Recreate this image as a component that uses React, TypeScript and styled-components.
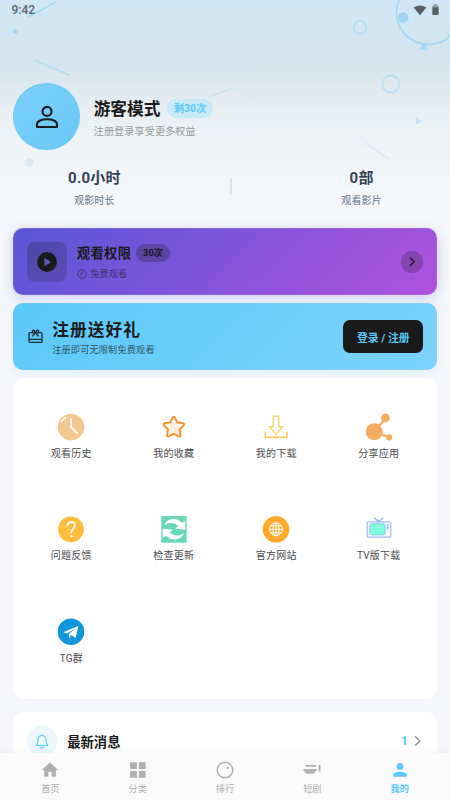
import React from 'react';
import styled, { createGlobalStyle, css } from 'styled-components';

const Global = createGlobalStyle`
  * { box-sizing: border-box; }
  html, body { margin: 0; padding: 0; }
  body {
    font-family: Roboto, 'Noto Sans CJK SC', sans-serif;
    background: #f5f7fb;
    overflow: hidden;
  }
  svg { display: block; flex: none; }
`;

const Screen = styled.div`
  position: relative;
  display: flex;
  flex-direction: column;
  width: 450px;
  height: 800px;
  overflow: hidden;
  background: linear-gradient(180deg, #cfe7f6 0, #d0e5f1 35px, #d2e4ed 60px, #dae7ee 78px, #e2eaf1 94px, #e7eff3 112px, #edf2f6 132px, #f1f5f8 165px, #f5f7fb 200px, #f5f6fb 100%);
`;

const Decor = styled.svg`
  position: absolute;
  left: 0;
  top: 0;
`;

const StatusBar = styled.div`
  position: relative;
  display: flex;
  justify-content: space-between;
  align-items: center;
  height: 20px;
  padding: 0 11.5px;
  color: #5b666d;
  font-size: 12px;
  font-weight: 500;
`;

const StatusIcons = styled.div`
  display: flex;
  gap: 5px;
  margin-top: -1px;
`;

const Content = styled.main`
  position: relative;
  flex: 1;
  min-height: 0;
  padding: 63px 13.33px 0;
`;

const Profile = styled.section`
  display: flex;
  align-items: center;
  height: 67px;
`;

const ProfileText = styled.div`
  padding-top: 2px;
`;

const Avatar = styled.div`
  display: flex;
  align-items: center;
  justify-content: center;
  width: 67px;
  height: 67px;
  margin-right: 13.4px;
  border-radius: 50%;
  border: 1px solid rgba(90, 195, 245, 0.5);
  background: linear-gradient(135deg, #7dcff9, #68c9f9);
`;

const TitleRow = styled.div`
  display: flex;
  align-items: center;
`;

const UserName = styled.h1`
  margin: 0;
  padding-top: 2px;
  color: #1a1a1a;
  font-size: 16.67px;
  line-height: 24px;
  font-weight: 700;
`;

const QuotaBadge = styled.span`
  margin-left: 7px;
  padding: 0.5px 6.7px 0;
  border-radius: 9px;
  background: #c8e9f8;
  color: #5ac8fa;
  font-size: 10px;
  line-height: 18px;
  font-weight: 700;
  letter-spacing: 0.25px;
`;

const UserHint = styled.p`
  margin: 2px 0 0;
  color: #999;
  font-size: 10px;
  line-height: 16px;
  letter-spacing: 0.2px;
`;

const Stats = styled.section`
  display: flex;
  align-items: center;
  justify-content: space-around;
  height: 78.3px;
  padding-bottom: 4px;
`;

const Stat = styled.div`
  text-align: center;
`;

const StatValue = styled.div`
  color: #334155;
  font-size: 15px;
  line-height: 22px;
  font-weight: 700;
  letter-spacing: 0.2px;
`;

const StatLabel = styled.div`
  margin-top: 4px;
  color: #64748b;
  font-size: 10px;
  line-height: 15px;
  letter-spacing: 0.15px;
`;

const StatDivider = styled.div`
  width: 1.6px;
  height: 17px;
  margin-bottom: 1px;
  background: #dfe3e8;
`;

const Banner = styled.section<{ $kind: 'rights' | 'gift' }>`
  display: flex;
  align-items: center;
  height: 66.7px;
  padding: 0 13.33px;
  border-radius: 10px;
  color: #1a1a1a;
  ${(p) =>
    p.$kind === 'rights'
      ? css`
          background: linear-gradient(135deg, #5856d6, #af52de);
          box-shadow: inset 0 0 0 0.8px rgba(255, 255, 255, 0.1), 0 3px 12px rgba(88, 86, 214, 0.26);
        `
      : css`
          margin-top: 8.3px;
          background: linear-gradient(135deg, #5ac8fa, #7dd3fc);
          box-shadow: inset 0 0 0 0.8px rgba(150, 200, 235, 0.25), 0 3px 10px rgba(90, 200, 250, 0.14);
        `}
`;

const PlayTile = styled.div`
  display: flex;
  align-items: center;
  justify-content: center;
  width: 40px;
  height: 40px;
  margin-right: 10.2px;
  border-radius: 8px;
  background: linear-gradient(135deg, rgba(26, 26, 26, 0.25), rgba(26, 26, 26, 0.15));
`;

const BannerText = styled.div<{ $gap?: number }>`
  flex: 1;
  margin-left: ${(p) => p.$gap ?? 0}px;
`;

const RightsTitle = styled.h2`
  margin: 0;
  padding-top: 2px;
  font-size: 13.33px;
  line-height: 20px;
  font-weight: 700;
  letter-spacing: 0.3px;
`;

const RightsBadge = styled.span`
  margin-left: 5px;
  padding: 0 6.7px;
  border-radius: 9px;
  background: rgba(26, 26, 26, 0.27);
  font-size: 9.17px;
  line-height: 17.5px;
  font-weight: 700;
  letter-spacing: 0.1px;
`;

const RightsHint = styled.div`
  display: flex;
  align-items: center;
  gap: 3.6px;
  margin-top: 2px;
  color: rgba(26, 26, 26, 0.62);
  font-size: 9.17px;
  line-height: 15px;
`;

const RoundArrow = styled.div`
  display: flex;
  align-items: center;
  justify-content: center;
  width: 22px;
  height: 22px;
  border-radius: 50%;
  background: rgba(26, 26, 26, 0.24);
`;

const GiftTitle = styled.h2`
  margin: 4px 0 0;
  font-size: 16.67px;
  line-height: 22px;
  font-weight: 700;
  letter-spacing: 1.1px;
`;

const GiftHint = styled.p`
  margin: 0;
  color: rgba(26, 26, 26, 0.72);
  font-size: 9.17px;
  line-height: 15px;
  letter-spacing: 0.17px;
`;

const LoginButton = styled.button`
  width: 80px;
  height: 33.4px;
  padding: 0;
  border: 0;
  border-radius: 7px;
  background: #1a1a1a;
  color: #5ac8fa;
  font: inherit;
  font-size: 10.83px;
  font-weight: 700;
`;

const Menu = styled.section`
  display: grid;
  grid-template-columns: repeat(4, 102.5px);
  grid-auto-rows: 102.5px;
  justify-content: center;
  height: 320.8px;
  margin-top: 8px;
  padding-top: 7px;
  border-radius: 11px;
  background: #fff;
`;

const MenuItem = styled.div`
  display: flex;
  flex-direction: column;
  align-items: center;
  padding-top: 27.6px;
  color: #4b4b4b;
  font-size: 10px;
  line-height: 15px;
  letter-spacing: 0.2px;
`;

const MenuIcon = styled.svg.attrs({ viewBox: '0 0 28 28', width: 28, height: 28, fill: 'none' })`
  margin-bottom: 5.4px;
`;

const News = styled.section`
  display: flex;
  align-items: center;
  height: 90px;
  margin-top: 13.2px;
  padding: 0 13.33px 31px;
  border-radius: 11px;
  background: #fff;
`;

const BellCircle = styled.div`
  display: flex;
  align-items: center;
  justify-content: center;
  width: 30px;
  height: 30px;
  margin-right: 10.5px;
  border-radius: 50%;
  background: #ebf8fe;
`;

const NewsTitle = styled.h2`
  flex: 1;
  margin: 0;
  padding-top: 3px;
  color: #1a1a1a;
  font-size: 13.33px;
  line-height: 20px;
  font-weight: 700;
`;

const NewsCount = styled.span`
  margin-right: 5.5px;
  color: #5ac8fa;
  font-size: 12px;
  font-weight: 700;
`;

const NavBar = styled.nav`
  position: relative;
  display: flex;
  height: 47px;
  padding: 0 6.67px;
  background: #fafafa;
  box-shadow: 0 -1px 7px rgba(0, 0, 0, 0.05);
`;

const NavItem = styled.div<{ $active?: boolean }>`
  display: flex;
  flex: 1;
  flex-direction: column;
  align-items: center;
  gap: 1.8px;
  padding-top: 7px;
  color: ${(p) => (p.$active ? '#5ac8fa' : '#b0b0b0')};
  font-size: 9.17px;
  line-height: 14px;
  font-weight: ${(p) => (p.$active ? 700 : 400)};
`;

const menu: { label: string; icon: React.ReactNode }[] = [
  {
    label: '观看历史',
    icon: (
      <>
        <circle cx="14" cy="14" r="13.3" fill="#f3c891" />
        <path d="M14 5.9v8.3l6.2 6.2" stroke="#fff" strokeWidth="1.7" strokeLinecap="round" strokeLinejoin="round" />
        <path d="M4.4 8.6C5.6 6.5 7 5.4 9.1 4.4" stroke="#fff" strokeWidth="1.4" strokeLinecap="round" />
      </>
    ),
  },
  {
    label: '我的收藏',
    icon: (
      <>
        <circle cx="14.6" cy="16" r="7.6" fill="#fff1e2" />
        <path
          d="M12.6 4.8q1.2-2.4 2.4 0l2.2 4.5 5.4.8q2.7.5.8 2.5l-3.8 3.8.9 5.4q.3 2.6-2.1 1.5l-4.6-2.5-4.6 2.5q-2.4 1.1-2.1-1.5l.9-5.4-3.8-3.8q-1.9-2 .8-2.5l5.4-.8z"
          stroke="#ff8a16" strokeWidth="1.8" strokeLinejoin="round"
        />
      </>
    ),
  },
  {
    label: '我的下载',
    icon: (
      <>
        <path d="M11.2 3.2h5.6v10.6h3.8L14 21.2l-6.6-7.4h3.8z" stroke="#f8d36c" strokeWidth="1.4" />
        <path d="M3.3 18.5v5.9h21.6v-5.9" stroke="#f6ce5d" strokeWidth="1.6" />
      </>
    ),
  },
  {
    label: '分享应用',
    icon: (
      <>
        <path d="M9 18.8 20.5 5.2M9 18.8l15.2 5.4" stroke="#f3ac61" strokeWidth="2.2" />
        <circle cx="9.2" cy="18.7" r="8.5" fill="#f3ac61" />
        <circle cx="20.4" cy="5" r="4.4" fill="#f3ac61" />
        <circle cx="24.2" cy="24.3" r="3.1" fill="#f3ac61" />
      </>
    ),
  },
  {
    label: '问题反馈',
    icon: (
      <>
        <circle cx="14" cy="14.3" r="12.9" fill="#ffbc3d" />
        <path d="M10.4 10.8c.1-5 7.6-5 7.6-.2 0 3.1-3.8 3.4-3.8 7.1" stroke="#fff" strokeWidth="1.8" strokeLinecap="round" />
        <circle cx="14.2" cy="21.3" r="1.2" fill="#fff" />
      </>
    ),
  },
  {
    label: '检查更新',
    icon: (
      <>
        <path d="M1.3 1h25.4v26.7H1.3z" fill="#6ad8b8" />
        <path
          d="M4.2 10.3C7 3 16.5 2.2 21.6 7.6l3.7-1.4v8.6L15 13.6l3.3-2.5C14.6 7.2 9 7 4.2 10.3zM24 18.2c-2.8 7.3-12.3 8.1-17.6 2.7l-3.7 1.6v-8.7l10.2.9-3.2 2.8c3.6 3.9 9.5 4 14.3.7z"
          fill="#fff"
        />
      </>
    ),
  },
  {
    label: '官方网站',
    icon: (
      <>
        <circle cx="14" cy="14.3" r="13.3" fill="#ffaa2b" />
        <g stroke="#fff" strokeWidth="1">
          <circle cx="14" cy="14.3" r="6.5" />
          <ellipse cx="14" cy="14.3" rx="3.1" ry="6.5" />
          <path d="M14 7.8v13M7.5 14.3h13M8.5 10.9h11M8.5 17.7h11" />
        </g>
      </>
    ),
  },
  {
    label: 'TV版下载',
    icon: (
      <>
        <path d="m9.2 2.9 4.6 3.8 4.4-3.8M12.6 5.7h3" stroke="#80acef" strokeWidth="1.1" />
        <rect x="2.2" y="6.8" width="23.6" height="15.4" rx="1.3" stroke="#9bb9fb" strokeWidth="1.2" />
        <rect x="4.7" y="8.7" width="15.4" height="11.2" rx="1.8" fill="#7effde" stroke="#79bce9" strokeWidth=".8" />
        <path d="M21.4 9.8h2.8M21.4 12.8h2.8M22.7 8.5v5.8" stroke="#9bb9fb" strokeWidth="1" />
      </>
    ),
  },
  {
    label: 'TG群',
    icon: (
      <>
        <circle cx="14" cy="13.7" r="13.3" fill="#1296db" />
        <path d="m6.2 14.3 15.1-6.2-2.6 12-4.3-3.2-2.3 3.5-.3-4.4 6.6-5.4-8.2 4.7z" fill="#fff" />
      </>
    ),
  },
];

const nav: { label: string; icon: React.ReactNode }[] = [
  { label: '首页', icon: <path d="M8.3 16.7v-5h3.4v5h4.1V10h2.5L10 2.4 1.7 10h2.5v6.7z" fill="currentColor" /> },
  { label: '分类', icon: <path d="M2.1 2.3H9V9H2.1zM10.8 2.3h6.8V9h-6.8zM2.1 10.9H9v6.8H2.1zM10.8 10.9h6.8v6.8h-6.8z" fill="currentColor" /> },
  {
    label: '排行',
    icon: (
      <>
        <circle cx="10" cy="10" r="7.8" stroke="currentColor" strokeWidth="1.5" />
        <circle cx="12.7" cy="7.9" r="1.2" fill="currentColor" />
      </>
    ),
  },
  { label: '短剧', icon: <path d="M3.4 5H14v1.8H3.4zM1.5 9h13.2v1.8q-.8.7-1.8.8V13q-1.3.7-1.9.7H5.2q-1.2 0-1.9-.8v-1.2q-1.4-.1-1.8-1zM16.7 5h1.8v6.7h-1.8z" fill="currentColor" /> },
  {
    label: '我的',
    icon: (
      <>
        <circle cx="10" cy="6.4" r="3.4" fill="currentColor" />
        <path d="M3.3 16.8v-2c0-4.2 13.4-4.2 13.4 0v2z" fill="currentColor" />
      </>
    ),
  },
];

export default function App() {
  return (
    <Screen>
      <Global />
      <Decor width="450" height="210" viewBox="0 0 450 210" fill="none">
        <g stroke="#8ed2f5">
          <circle cx="428.5" cy="12.5" r="32" strokeWidth="1.6" opacity=".7" />
          <circle cx="360" cy="27.5" r="6.3" strokeWidth="1.2" opacity=".5" />
          <circle cx="390.8" cy="84" r="8.5" strokeWidth="1.3" opacity=".5" />
          <circle cx="344" cy="181" r="5.5" strokeWidth=".8" opacity=".14" />
          <path d="M28 17 56 2" strokeWidth="1.8" opacity=".6" />
          <path d="m35 60.5 34 14.3" strokeWidth="1.8" opacity=".45" />
          <path d="m209 96.5 23.5-8" strokeWidth="1.5" opacity=".3" />
          <path d="m365.5 143 23.3 16" strokeWidth="1.5" opacity=".26" />
        </g>
        <g fill="#7ecaf4">
          <circle cx="403.3" cy="17.5" r="5.2" opacity=".55" />
          <circle cx="15" cy="31.5" r="2.6" opacity=".5" />
          <circle cx="29" cy="162.5" r="4.2" opacity=".22" />
          <path d="m419.5 48.5 6.5-6.5 1.8 9z" opacity=".5" />
          <path d="m415.8 117 6 4.5-5.6 2.8z" opacity=".38" />
        </g>
      </Decor>

      <StatusBar>
        <span>9:42</span>
        <StatusIcons>
          <svg width="14" height="12" viewBox="0 0 14 12"><path d="M.6 3.5Q7-.4 13.4 3.5L7 11.3z" fill="#555f65" /></svg>
          <svg width="7" height="12" viewBox="0 0 7 12"><path d="M2 0h3v1.5H2z" fill="#8a999f" /><path d="M.4 1.5h6.2V4H.4z" fill="#8a999f" /><path d="M.4 3.5h6.2V11H.4z" fill="#555f65" /></svg>
        </StatusIcons>
      </StatusBar>

      <Content>
        <Profile>
          <Avatar>
            <svg width="24" height="24" viewBox="0 0 24 24" fill="none" stroke="#1a1a1a" strokeWidth="2.1">
              <circle cx="12" cy="6.4" r="4.5" />
              <path d="M2 22v-2.9C2 12.6 22 12.6 22 19.1V22z" strokeLinejoin="round" />
            </svg>
          </Avatar>
          <ProfileText>
            <TitleRow>
              <UserName>游客模式</UserName>
              <QuotaBadge>剩30次</QuotaBadge>
            </TitleRow>
            <UserHint>注册登录享受更多权益</UserHint>
          </ProfileText>
        </Profile>

        <Stats>
          <Stat>
            <StatValue>0.0小时</StatValue>
            <StatLabel>观影时长</StatLabel>
          </Stat>
          <StatDivider />
          <Stat>
            <StatValue>0部</StatValue>
            <StatLabel>观看影片</StatLabel>
          </Stat>
        </Stats>

        <Banner $kind="rights">
          <PlayTile>
            <svg width="20" height="20" viewBox="0 0 20 20">
              <circle cx="10" cy="10" r="9.9" fill="#1a1a1a" />
              <path d="M7.4 5.7v8.6l6.8-4.3z" fill="#6058b4" />
            </svg>
          </PlayTile>
          <BannerText>
            <TitleRow>
              <RightsTitle>观看权限</RightsTitle>
              <RightsBadge>30次</RightsBadge>
            </TitleRow>
            <RightsHint>
              <svg width="10" height="10" viewBox="0 0 10 10" fill="none" stroke="currentColor" strokeWidth=".85">
                <circle cx="5" cy="5" r="4.2" />
                <path d="M5.2 2.6v2.6H3" />
              </svg>
              免费观看
            </RightsHint>
          </BannerText>
          <RoundArrow>
            <svg width="8" height="12" viewBox="0 0 8 12" fill="none" stroke="#29192e" strokeWidth="1.4"><path d="m1.8 1.5 4.3 4.3-4.3 4.3" /></svg>
          </RoundArrow>
        </Banner>

        <Banner $kind="gift">
          <svg width="17" height="17" viewBox="0 0 17 17" fill="none" stroke="#20343e" strokeWidth="1.4">
            <rect x="2" y="4.6" width="13" height="9.8" rx="1" />
            <path d="M2 11.4h13M5.3 8.2 8.5 4.7l3.2 3.5" />
            <circle cx="6.6" cy="3.5" r="1.2" />
            <circle cx="10.4" cy="3.5" r="1.2" />
          </svg>
          <BannerText $gap={8.5}>
            <GiftTitle>注册送好礼</GiftTitle>
            <GiftHint>注册即可无限制免费观看</GiftHint>
          </BannerText>
          <LoginButton>登录 / 注册</LoginButton>
        </Banner>

        <Menu>
          {menu.map((m) => (
            <MenuItem key={m.label}>
              <MenuIcon>{m.icon}</MenuIcon>
              {m.label}
            </MenuItem>
          ))}
        </Menu>

        <News>
          <BellCircle>
            <svg width="16" height="16" viewBox="0 0 16 16" fill="none" stroke="#5ac8fa" strokeWidth="1.1" strokeLinecap="round" strokeLinejoin="round">
              <path d="M2.1 12.5h11.8c-1.6-1.3-1.7-2.5-1.8-5C12 4.3 10.3 2.5 8 2.5S4 4.3 3.9 7.5c-.1 2.5-.2 3.7-1.8 5zM6.2 14.2c1 .9 2.6.9 3.6 0M8 1.5v1" />
            </svg>
          </BellCircle>
          <NewsTitle>最新消息</NewsTitle>
          <NewsCount>1</NewsCount>
          <svg width="10" height="12" viewBox="0 0 10 12" fill="none" stroke="#999" strokeWidth="1.5"><path d="m2.2 1.4 4.6 4.6-4.6 4.6" /></svg>
        </News>
      </Content>

      <NavBar>
        {nav.map((n) => (
          <NavItem key={n.label} $active={n.label === '我的'}>
            <svg width="20" height="20" viewBox="0 0 20 20" fill="none">{n.icon}</svg>
            {n.label}
          </NavItem>
        ))}
      </NavBar>
    </Screen>
  );
}
